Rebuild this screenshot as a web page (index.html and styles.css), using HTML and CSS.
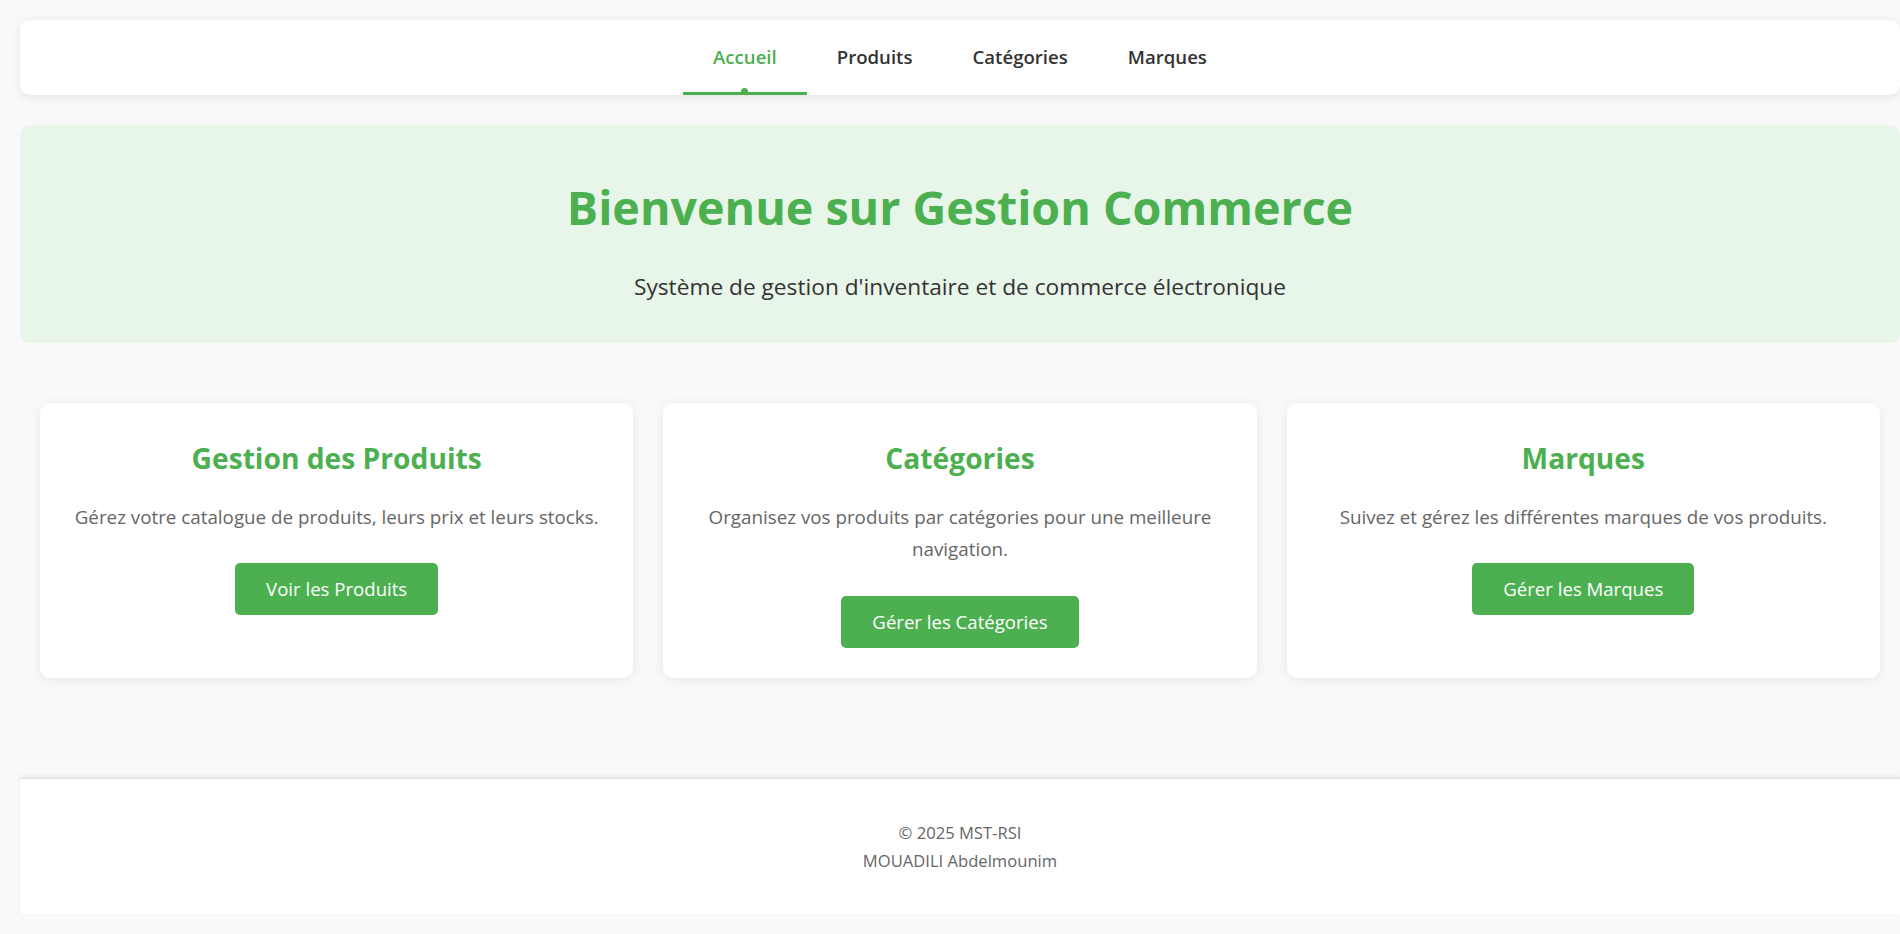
FILE: index.html
```html
<!DOCTYPE html>
<html lang="fr">
<head>
<meta charset="utf-8">
<title>Gestion Commerce</title>
<link rel="stylesheet" href="styles.css">
</head>
<body>
<nav class="navbar">
  <ul class="nav-list">
    <li><a class="nav-link active" href="#">Accueil</a></li>
    <li><a class="nav-link" href="#">Produits</a></li>
    <li><a class="nav-link" href="#">Catégories</a></li>
    <li><a class="nav-link" href="#">Marques</a></li>
  </ul>
</nav>

<section class="hero">
  <h1 class="hero-title">Bienvenue sur Gestion Commerce</h1>
  <p class="hero-subtitle">Système de gestion d'inventaire et de commerce électronique</p>
</section>

<section class="features">
  <div class="card">
    <h3 class="card-title">Gestion des Produits</h3>
    <p class="card-text">Gérez votre catalogue de produits, leurs prix et leurs stocks.</p>
    <a class="btn" href="#">Voir les Produits</a>
  </div>
  <div class="card">
    <h3 class="card-title">Catégories</h3>
    <p class="card-text">Organisez vos produits par catégories pour une meilleure navigation.</p>
    <a class="btn" href="#">Gérer les Catégories</a>
  </div>
  <div class="card">
    <h3 class="card-title">Marques</h3>
    <p class="card-text">Suivez et gérez les différentes marques de vos produits.</p>
    <a class="btn" href="#">Gérer les Marques</a>
  </div>
</section>

<footer class="footer">
  <p class="footer-line">© 2025 MST-RSI</p>
  <p class="footer-line">MOUADILI Abdelmounim</p>
</footer>
</body>
</html>
```
FILE: styles.css
```css
* { box-sizing: border-box; }

html, body { margin: 0; }

body {
  padding: 20px 0 20px 20px;
  background: #f9f9f9;
  font-family: "Open Sans", "Noto Sans", sans-serif;
  color: #333;
}

/* Navbar */
.navbar {
  background: #fff;
  border-radius: 10px;
  box-shadow: 0 2px 10px rgba(0, 0, 0, 0.09);
  height: 75px;
}

.nav-list {
  list-style: none;
  margin: 0;
  padding: 0;
  display: flex;
  justify-content: center;
  height: 100%;
}

.nav-link {
  position: relative;
  display: flex;
  align-items: center;
  height: 75px;
  padding: 0 30px 2px;
  font-size: 18.6px;
  font-weight: 600;
  color: #333;
  text-decoration: none;
}

.nav-link.active { color: #4caf50; }

.nav-link.active::after {
  content: "";
  position: absolute;
  left: 0;
  right: 0;
  bottom: 0;
  height: 3px;
  background: #4caf50;
}

.nav-link.active::before {
  content: "";
  position: absolute;
  left: 50%;
  bottom: 0;
  width: 7px;
  height: 7px;
  margin-left: -3.5px;
  border-radius: 50%;
  background: #4caf50;
}

/* Hero */
.hero {
  margin-top: 30px;
  background: #e8f5e9;
  border-radius: 10px;
  padding: 54px 20px 39px;
  text-align: center;
}

.hero-title {
  margin: 0 0 35px;
  font-size: 46.6px;
  line-height: 56px;
  font-weight: 700;
  color: #4caf50;
}

.hero-subtitle {
  margin: 0;
  font-size: 22.7px;
  line-height: 34px;
  color: #333;
}

/* Cards */
.features {
  display: grid;
  grid-template-columns: repeat(3, 1fr);
  gap: 30px;
  padding: 0 20px;
  margin: 60px 0 100px;
}

.card {
  background: #fff;
  border-radius: 10px;
  box-shadow: 0 2px 12px rgba(0, 0, 0, 0.08);
  padding: 30px 30px;
  text-align: center;
}

.card-title {
  margin: 0 0 18px;
  font-size: 28.2px;
  line-height: 50px;
  font-weight: 700;
  color: #4caf50;
}

.card-text {
  margin: 0 0 30px;
  font-size: 18.8px;
  line-height: 32.4px;
  color: #666;
}

.btn {
  display: inline-block;
  padding: 12px 31px;
  font-size: 18.6px;
  line-height: 28px;
  color: #fff;
  background: #4caf50;
  border-radius: 5px;
  text-decoration: none;
}

/* Footer */
.footer {
  background: #fff;
  box-shadow: 0 -2px 4px rgba(0, 0, 0, 0.08);
  border-top: 1px solid #e4e4e4;
  padding: 40px 20px 39px;
  text-align: center;
}

.footer-line {
  margin: 0;
  font-size: 16.6px;
  line-height: 28px;
  color: #666;
}
```
